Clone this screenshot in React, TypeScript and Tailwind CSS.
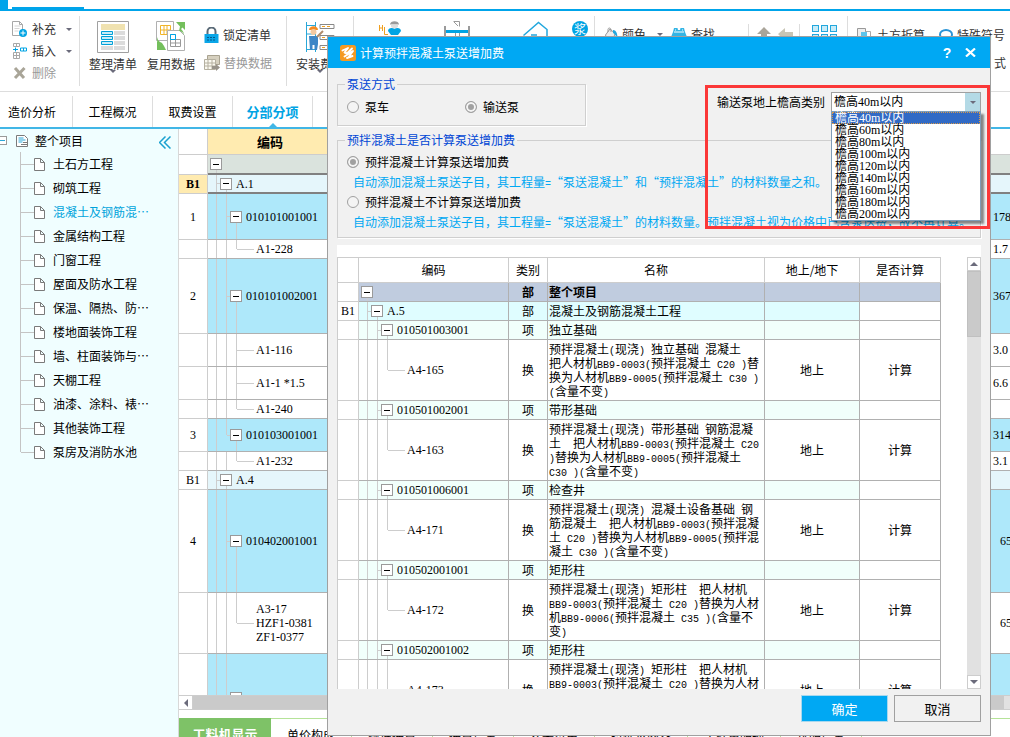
import { Fragment, type ReactNode } from 'react'
import clsx from 'clsx'

const HEIGHT_TYPES = [
  '檐高40m以内',
  '檐高60m以内',
  '檐高80m以内',
  '檐高100m以内',
  '檐高120m以内',
  '檐高140m以内',
  '檐高160m以内',
  '檐高180m以内',
  '檐高200m以内',
]

const SECTIONS = [
  '土石方工程',
  '砌筑工程',
  '混凝土及钢筋混…',
  '金属结构工程',
  '门窗工程',
  '屋面及防水工程',
  '保温、隔热、防…',
  '楼地面装饰工程',
  '墙、柱面装饰与…',
  '天棚工程',
  '油漆、涂料、裱…',
  '其他装饰工程',
  '泵房及消防水池',
]

const BOTTOM_TABS = ['单价构成', '标准换算', '换算信息', '安装费用', '特征及内容', '工程量明细', '说明信息']

type Node = { depth: number; leaf?: boolean; last?: boolean; code?: string }

type BillRow = Node & { no?: string; bold?: boolean; h: string; bg: string; line: string; value?: string; pad?: string }

const BLUE = 'bg-[#aee8fa]'
const PALE = 'bg-[#e5f6fb]'
const THIN = 'border-b border-b-[#b0b0b0]'
const THICK = 'border-b-2 border-b-[#808080]'

const BILL: BillRow[] = [
  { depth: 0, h: 'h-[18px]', bg: 'bg-[#dae3dd]', line: THICK },
  { no: 'B1', bold: true, depth: 1, code: 'A.1', h: 'h-[17px]', bg: PALE, line: THICK },
  { no: '1', depth: 2, code: '010101001001', h: 'h-[45px]', bg: BLUE, line: THIN, value: '178' },
  { depth: 3, leaf: true, last: true, code: 'A1-228', h: 'h-[18px]', bg: 'bg-white', line: THIN, value: '1.7' },
  { no: '2', depth: 2, code: '010101002001', h: 'h-[74px]', bg: BLUE, line: THIN, value: '367' },
  { depth: 3, leaf: true, code: 'A1-116', h: 'h-8', bg: 'bg-white', line: THIN, value: '3.0' },
  { depth: 3, leaf: true, code: 'A1-1 *1.5', h: 'h-8', bg: 'bg-white', line: THIN, value: '6.6' },
  { depth: 3, leaf: true, last: true, code: 'A1-240', h: 'h-[18px]', bg: 'bg-white', line: THIN },
  { no: '3', depth: 2, last: true, code: '010103001001', h: 'h-8', bg: BLUE, line: THIN, value: '314' },
  { depth: 3, leaf: true, last: true, code: 'A1-232', h: 'h-[18px]', bg: 'bg-white', line: THIN, value: '3.1' },
  { no: 'B1', depth: 1, code: 'A.4', h: 'h-[18px]', bg: PALE, line: THIN },
  { no: '4', depth: 2, code: '010402001001', h: 'h-[102px]', bg: BLUE, line: THIN, value: '65', pad: 'pl-2' },
  { depth: 3, leaf: true, last: true, code: 'A3-17\nHZF1-0381\nZF1-0377', h: 'h-15', bg: 'bg-white', line: THIN, value: '65', pad: 'pl-2' },
  { depth: 2, h: 'h-22', bg: BLUE, line: THIN },
]

type PumpRow = Node & { no?: string; kind: string; name: string; place?: string; calc?: string }

const PUMP: PumpRow[] = [
  { depth: 0, kind: '部', name: '整个项目' },
  { no: 'B1', depth: 1, code: 'A.5', kind: '部', name: '混凝土及钢筋混凝土工程' },
  { depth: 2, code: '010501003001', kind: '项', name: '独立基础' },
  {
    depth: 3, leaf: true, last: true, code: 'A4-165', kind: '换', place: '地上', calc: '计算',
    name: '预拌混凝土(现浇) 独立基础 混凝土\n把人材机BB9-0003(预拌混凝土 C20 )替\n换为人材机BB9-0005(预拌混凝土 C30 )\n(含量不变)',
  },
  { depth: 2, code: '010501002001', kind: '项', name: '带形基础' },
  {
    depth: 3, leaf: true, last: true, code: 'A4-163', kind: '换', place: '地上', calc: '计算',
    name: '预拌混凝土(现浇) 带形基础 钢筋混凝\n土  把人材机BB9-0003(预拌混凝土 C20\n)替换为人材机BB9-0005(预拌混凝土\nC30 )(含量不变)',
  },
  { depth: 2, code: '010501006001', kind: '项', name: '检查井' },
  {
    depth: 3, leaf: true, last: true, code: 'A4-171', kind: '换', place: '地上', calc: '计算',
    name: '预拌混凝土(现浇) 混凝土设备基础 钢\n筋混凝土  把人材机BB9-0003(预拌混凝\n土 C20 )替换为人材机BB9-0005(预拌混\n凝土 C30 )(含量不变)',
  },
  { depth: 2, code: '010502001001', kind: '项', name: '矩形柱' },
  {
    depth: 3, leaf: true, last: true, code: 'A4-172', kind: '换', place: '地上', calc: '计算',
    name: '预拌混凝土(现浇) 矩形柱  把人材机\nBB9-0003(预拌混凝土 C20 )替换为人材\n机BB9-0006(预拌混凝土 C35 )(含量不\n变)',
  },
  { depth: 2, code: '010502001002', kind: '项', name: '矩形柱' },
  {
    depth: 3, leaf: true, last: true, code: 'A4-173', kind: '换', place: '地上', calc: '计算',
    name: '预拌混凝土(现浇) 矩形柱  把人材机\nBB9-0003(预拌混凝土 C20 )替换为人材\n机BB9-0006(预拌混凝土 C35 )(含量不\n变)',
  },
]

// Half-width runs are set in the mono face so they take half a Chinese character each
function Mixed({ text }: { text: string }) {
  return (
    <>
      {text.split(/([\x20-\x7e]+)/).map((part, i) =>
        i % 2 ? (
          <span key={i} className="font-['Liberation_Mono',monospace] text-[10px] leading-[8px]">{part}</span>
        ) : (
          <Fragment key={i}>{part}</Fragment>
        )
      )}
    </>
  )
}

function Caret({ className }: { className?: string }) {
  return (
    <svg viewBox="0 0 6 3" className={clsx('h-[3px] w-1.5 shrink-0', className)} fill="#6b6b7b">
      <path d="M0 0h6L3 3z" />
    </svg>
  )
}

function MinusBox() {
  return (
    <button aria-label="折叠" className="flex size-3 shrink-0 items-center justify-center border border-[#9a9a9a] bg-white">
      <span className="h-px w-1.5 bg-black" />
    </button>
  )
}

function TreeCell({ depth, leaf, last, code, h }: Node & { h: string }) {
  return (
    <div className={clsx('-ml-px flex', h)}>
      {Array.from({ length: depth }, (_, i) => (
        <span
          key={i}
          className={clsx('w-2.5 shrink-0 border-r border-[#cdcdcd]', last && i === depth - 1 ? 'h-1/2' : 'h-full')}
        />
      ))}
      {leaf ? (
        <span className="h-px w-[17px] shrink-0 self-center bg-[#cdcdcd]" />
      ) : (
        <>
          <span className={clsx('h-px w-[3px] shrink-0 self-center', depth > 0 && 'bg-[#cdcdcd]')} />
          <span className="flex flex-col">
            <span className="flex-1" />
            <MinusBox />
            <span className="w-[7px] flex-1 border-r border-[#cdcdcd]" />
          </span>
        </>
      )}
      <span
        className={clsx(
          "self-center whitespace-pre text-left font-['Liberation_Serif',serif] leading-[14px]",
          leaf ? 'ml-0.5' : 'ml-1'
        )}
      >
        {code}
      </span>
    </div>
  )
}

/* Ribbon icons */

const AddPageIcon = () => (
  <svg viewBox="0 0 15 16" className="h-4 w-[15px]" fill="none">
    <path d="M.5.5h7l3 3v11H.5zM7.5.5v3h3" stroke="#a8a8a8" fill="#fff" />
    <path d="M2.5 5h6M2.5 7.500h5M2.5 10h4" stroke="#d5d5d5" />
    <circle cx="11" cy="12" r="4" fill="#00a4e4" />
    <path d="M11 9.500v5M8.500 12h5" stroke="#fff" />
  </svg>
)

const InsertIcon = () => (
  <svg viewBox="0 0 15 16" className="h-4 w-[15px]" fill="none">
    <path d="M1.500.5h6v3h-6zM4.500.5v3M1.500 9.500h6v6h-6zM4.500 9.500v6M1.500 12.500h6" stroke="#a8a8a8" />
    <path d="M1 6.500h5M3.500 4.500v4M8.500 5h6v3h-6zM11.500 5v3" stroke="#00a4e4" />
  </svg>
)

const DeleteIcon = () => (
  <svg viewBox="0 0 15 16" className="h-4 w-[15px]" fill="none">
    <path d="M3 3l9 10M12.500 3L3 13" stroke="#a9a598" strokeWidth="3" />
  </svg>
)

const ListIcon = () => (
  <svg viewBox="0 0 32 32" className="size-8" fill="none">
    <path d="M.5.5h31v31H.5z" stroke="#a0a0a0" fill="#fff" />
    <path d="M4 3h24v6H4z" fill="#f0e2b0" />
    <path d="M17 10h11v4H17zM17 15h11v4H17zM17 20h11v4H17zM4 25h12v4H4zM17 25h11v4H17z" fill="#dcdcdc" />
    <path d="M4.500 10.500h11v3h-11zM4.500 15.500h11v3h-11zM4.500 20.500h11v3h-11z" stroke="#00a0d8" fill="#c8ecf8" />
  </svg>
)

const ReuseIcon = () => (
  <svg viewBox="0 0 30 32" className="h-8 w-[30px]" fill="none">
    <path d="M.5.5h17v19H.5z" stroke="#b0b0b0" fill="#fff" />
    <path d="M4.500 4.500h10v9h-10zM8 4.500v9M11 4.500v9M4.500 9h10" stroke="#f0b429" />
    <path d="M11.500 9.500h12l5 5v15h-17z" stroke="#b0b0b0" fill="#fff" />
    <path d="M14.500 13.500h5v5h-5zM14.500 18.500h10v7h-10zM19.500 18.500v7M14.500 22h10" stroke="#999" />
    <path d="M14.500 13.500h5v5h-5z" stroke="#00a4e4" />
    <path d="M20 1h9v8l-2.500-2.500-1.500 1.500c2 2 3 4 3 6-1-3-3-4-5-4l1-4.500zM10 29H1v-9l2 2.500C1 21 1 19 1 16c1 4 3 5 5 6l2 3z" fill="#74bf5c" />
  </svg>
)

const LockIcon = () => (
  <svg viewBox="0 0 15 17" className="h-[17px] w-[15px]" fill="none">
    <path d="M3.500 7V4.500a4 4 0 018 0V7" stroke="#5b6b78" strokeWidth="2" />
    <path d="M.5 7h14v9H.5z" fill="#0aa6e8" />
    <path d="M3 10.500h9M3 13h9" stroke="#04598a" strokeDasharray="2 1" />
  </svg>
)

const ReplaceIcon = () => (
  <svg viewBox="0 0 16 16" className="size-4" fill="none">
    <path d="M3.500.5h12v9h-12z" fill="#d6d0bf" stroke="#a8a290" />
    <path d="M.5 4.500h11v10H.5zM.5 8h11M.5 11h11M4 4.500v10M8 4.500v10" fill="#fbf9f0" stroke="#b5b0a0" />
    <path d="M8 11h4V9l4 3.500-4 3.500v-2H8z" fill="#98938a" />
  </svg>
)

const InstallIcon = () => (
  <svg viewBox="0 0 32 32" className="size-8" fill="none">
    <path d="M2.500 1v30M11.500 1v30M2.500 4.500h9M2.500 13h9M2.500 28.500h9" stroke="#2aa7d8" />
    <path d="M16 3.500h14v4H16zM16 14.500h14v4H16zM16 24.500h14v4H16z" stroke="#888" fill="#fff" />
    <path d="M18 5.500h10M18 16.500h10M18 26.500h10" stroke="#f0a020" strokeDasharray="3 2" />
    <path d="M5 9c0-5 9-5 9 0z" fill="#f58a1f" />
    <circle cx="9.500" cy="11" r="3" fill="#f3c9a0" />
    <path d="M5 15h9v8l-1 6h-2.500v-5h-2v5H6z" fill="#3d86c6" />
    <path d="M13 16l6-6" stroke="#b08b6a" strokeWidth="2" />
  </svg>
)

const WorkerIcon = () => (
  <svg viewBox="0 0 22 22" className="size-[22px] shrink-0" fill="none">
    <path d="M.5 4v6M3.500 4v6M.5 7h3M5.500 6v7.500H9" stroke="#f0a020" />
    <path d="M11 3.500c0-4.500 9-4.500 9 0z" fill="#9a9a9a" />
    <path d="M12 3.500h7v2.500l-3.500 2L12 6z" fill="#ddd" />
    <path d="M9 10c0-3 4-4 6.500-2 2.500-2 6.500-1 6.500 2l-3 4h-7z" fill="#00a4e4" />
  </svg>
)

const BridgeIcon = () => (
  <svg viewBox="0 0 26 22" className="h-[22px] w-[26px] shrink-0" fill="none">
    <path d="M1 5v17M25 5v17" stroke="#9a9a9a" strokeWidth="2" />
    <path d="M2 9h22v3H2z" fill="#00a4e4" />
    <path d="M9.500.5h6v5M10 1l4 4M11.500 12v5M15.500 12v5" stroke="#9a9a9a" />
  </svg>
)

const HouseIcon = () => (
  <svg viewBox="0 0 25 22" className="h-[22px] w-[25px] shrink-0" fill="none">
    <path d="M.5 14.500L15.500 1.500l8.500 7V20M8 14h6" stroke="#22a7dd" strokeWidth="1.500" />
  </svg>
)

const PaintIcon = () => (
  <svg viewBox="0 0 14 14" className="size-3.5 shrink-0" fill="none">
    <path d="M1.500 8L6 2l5 4.500L9 13H3z" stroke="#999" fill="#eee" />
    <path d="M4 5V2.500C4 .5 7 .5 7 3v2" stroke="#999" />
    <path d="M9 3c3 0 4.500 3 4.500 8-1.500-1-2-4-4.500-5z" fill="#22a7dd" />
  </svg>
)

const BinocularIcon = () => (
  <svg viewBox="0 0 16 14" className="h-3.5 w-4 shrink-0">
    <path d="M3 1h3.500l.5 2h2l.5-2H13l1 4 2 5v4H9v-4H7v4H0v-4l2-5z" fill="#33b5e5" />
    <path d="M3 5h10M4 3h1M11 3h1" stroke="#fff" />
  </svg>
)

const BlocksIcon = () => (
  <svg viewBox="0 0 26 22" className="h-[22px] w-[26px] shrink-0" fill="#c8ecf8" stroke="#22a7dd">
    {[0, 9, 18].map((x) => (
      <Fragment key={x}>
        <rect x={x + 0.5} y=".5" width="6" height="6" />
        <rect x={x + 0.5} y="9.5" width="6" height="6" />
      </Fragment>
    ))}
  </svg>
)

const LogoIcon = () => (
  <svg viewBox="0 0 16 16" className="size-4 shrink-0">
    <rect width="16" height="16" rx="2.500" fill="#f59a22" />
    <path
      d="M2.500 5.500L8 3 4.500 7.500 7 8.500 12 3.500M4.500 11.500L13 6l-4 5.500M7 13l5.500-2"
      fill="none"
      stroke="#fff"
      strokeWidth="1.900"
      strokeLinecap="round"
      strokeLinejoin="round"
    />
  </svg>
)

const PageIcon = () => (
  <svg viewBox="0 0 11 13" className="h-[13px] w-[11px] shrink-0">
    <path d="M.5.5h6l4 4v8H.5zM6.500.5v4h4" fill="#fff" stroke="#7a7a7a" />
  </svg>
)

function BigButton({ icon, label, caret }: { icon: ReactNode; label: string; caret?: boolean }) {
  return (
    <button className="flex w-[50px] shrink-0 flex-col items-center text-[#333]">
      {icon}
      <span className="mt-[3px] leading-4 whitespace-nowrap">{label}</span>
      {caret && <Caret className="-mt-0.5" />}
    </button>
  )
}

function Ribbon() {
  return (
    <div className="flex h-[81px] shrink-0 overflow-hidden border-b border-[#ddd] py-[5px] text-[#333]">
      <div className="flex w-20 shrink-0 flex-col border-r border-[#ddd] pt-0.5 pl-3">
        <button className="flex h-[22px] items-center">
          <AddPageIcon />
          <span className="ml-[5px]">补充</span>
          <Caret className="ml-2.5" />
        </button>
        <button className="flex h-[22px] items-center">
          <InsertIcon />
          <span className="ml-[5px]">插入</span>
          <Caret className="ml-2.5" />
        </button>
        <button className="flex h-[22px] items-center text-[#999]">
          <DeleteIcon />
          <span className="ml-[5px]">删除</span>
        </button>
      </div>

      <div className="flex w-[207px] shrink-0 items-start gap-2 border-r border-[#ddd] pt-[5px] pl-2">
        <BigButton icon={<ListIcon />} label="整理清单" caret />
        <BigButton icon={<ReuseIcon />} label="复用数据" />
        <div className="flex flex-col">
          <button className="flex h-7 items-center gap-1">
            <LockIcon />
            锁定清单
          </button>
          <button className="flex h-7 items-center gap-1 text-[#999]">
            <ReplaceIcon />
            替换数据
          </button>
        </div>
      </div>

      <div className="flex w-[67px] shrink-0 items-start border-r border-[#ddd] pt-[5px] pl-2">
        <BigButton icon={<InstallIcon />} label="安装费用" caret />
      </div>

      <div className="flex w-[241px] shrink-0 items-start border-r border-[#ddd] pt-[5px] pl-[25px]">
        <WorkerIcon />
        <span className="ml-[43px]"><BridgeIcon /></span>
        <span className="ml-[53px]"><HouseIcon /></span>
        <span className="ml-6 flex size-4 shrink-0 items-center justify-center rounded-full bg-[#00a4e4] text-white">浆</span>
      </div>

      <div className="flex w-[253px] shrink-0 items-start border-r border-[#ddd] pl-[9px]">
        <div className="flex h-9 items-center">
          <PaintIcon />
          <span className="ml-1">颜色</span>
          <Caret className="ml-[11px]" />
          <span className="ml-2"><BinocularIcon /></span>
          <span className="ml-1">查找</span>
          <span className="ml-[33px] h-5 w-px bg-[#ddd]" />
          <svg viewBox="0 0 14 14" className="ml-2 size-3.5" fill="#aaa59a"><path d="M7 0l7 7h-4v7H4V7H0z" /></svg>
          <svg viewBox="0 0 15 14" className="ml-[7px] h-3.5 w-[15px]" fill="#c8c5b5"><path d="M0 7l7-6v4h8v6H7v3z" /></svg>
          <span className="ml-1.5 h-5 w-px bg-[#ddd]" />
          <span className="mt-1 ml-3"><BlocksIcon /></span>
        </div>
      </div>

      <div className="flex-1 pt-[5px] pl-[9px]">
        <div className="flex h-7 items-center whitespace-nowrap">
          <svg viewBox="0 0 14 14" className="size-3.5 shrink-0" fill="none">
            <path d="M.5.5h8v13h-8z" stroke="#999" fill="#eee" />
            <path d="M8.500 3.500h5v10h-5z" stroke="#aaa" />
            <path d="M4 4h6v8H4z" fill="#5cc4ec" />
          </svg>
          <span className="ml-1.5">土方折算</span>
          <svg viewBox="0 0 14 14" className="ml-3.5 size-3.5 shrink-0" fill="none" stroke="#2a94d6" strokeWidth="2">
            <path d="M1 13h4v-2C2 10 1 8 1 6.500a6 4.500 0 0112 0C13 8 12 10 9 11v2h4" />
          </svg>
          <span className="ml-1">特殊符号</span>
        </div>
        <div className="flex h-7 items-center justify-end pr-1">式</div>
      </div>
    </div>
  )
}

function NavTabs() {
  return (
    <nav className="flex h-[37px] shrink-0 items-end border-b-2 border-[#41b6e6]">
      {['造价分析', '工程概况', '取费设置', '分部分项'].map((t, i) => (
        <a
          key={t}
          href="#"
          className={clsx(
            'relative flex h-[31px] items-center justify-center border-r border-[#ddd]',
            i === 0 ? 'w-[73px] pr-2' : 'w-20',
            i === 3 ? 'text-[13px] font-bold text-[#00a4e4]' : 'text-black'
          )}
        >
          {t}
          {i === 3 && (
            <svg viewBox="0 0 8 4" className="absolute bottom-0 h-1 w-2" fill="#41b6e6"><path d="M0 4l4-4 4 4z" /></svg>
          )}
        </a>
      ))}
    </nav>
  )
}

function Sidebar() {
  return (
    <aside className="w-[179px] shrink-0 border-r border-[#d8d8d8] bg-[#f0feff]">
      <div className="flex h-[23px] items-center">
        <button aria-label="折叠" className="flex h-[9px] w-[7px] items-center border border-l-0 border-[#9a9a9a] bg-white">
          <span className="h-px w-[5px] bg-[#2aa7d8]" />
        </button>
        <svg viewBox="0 0 12 12" className="ml-[9px] size-3" fill="none">
          <path d="M.5.5h8l3 3v8H.5z" fill="#fff" stroke="#7a7a7a" />
          <path d="M2.500 3h5M2.500 5h7M2.500 7h4" stroke="#2aa7d8" />
          <path d="M5 9.500h6M7 7.500h4" stroke="#7a7a7a" />
        </svg>
        <span className="ml-[7px]">整个项目</span>
        <button aria-label="收起" className="ml-auto pt-1 pr-[7px]">
          <svg viewBox="0 0 12 13" className="h-[13px] w-3" fill="none" stroke="#1ba1d0" strokeWidth="1.500">
            <path d="M6.500.5l-6 6 6 6M11.500.5l-6 6 6 6" />
          </svg>
        </button>
      </div>
      <ul>
        {SECTIONS.map((s, i) => (
          <li key={s} className="ml-5 flex h-6">
            <span className={clsx('w-px bg-[#c4c4c4]', i === SECTIONS.length - 1 ? 'h-1/2' : 'h-full')} />
            <span className="h-px w-[13px] self-center bg-[#c4c4c4]" />
            <a href="#" className={clsx('flex items-center gap-2', i === 2 ? 'text-[#00a4dc]' : 'text-black')}>
              <PageIcon />
              {s}
            </a>
          </li>
        ))}
      </ul>
    </aside>
  )
}

function BillTable() {
  return (
    <div className="min-h-0 flex-1 overflow-hidden">
      <table className="w-full table-fixed border-separate border-spacing-0">
        <colgroup>
          <col className="w-[29px]" />
          <col className="w-[125px]" />
          <col />
          <col className="w-[18px]" />
        </colgroup>
        <thead>
          <tr className="h-[26px]">
            <th className="border-r border-b border-[#cdcdcd] p-0" />
            <th className="border-r border-b border-[#cdcdcd] bg-[#ffebb0] p-0 text-[13px] font-bold">编码</th>
            <th className="border-b border-[#cdcdcd] p-0" />
            <th className="border-b border-[#cdcdcd] p-0" />
          </tr>
        </thead>
        <tbody>
          {BILL.map((r, i) => (
            <tr key={i}>
              <td
                className={clsx(
                  "border-r border-b border-[#cdcdcd] p-0 text-center font-['Liberation_Serif',serif] leading-[14px]",
                  r.bold && 'bg-[#ffebb0] font-bold'
                )}
              >
                {r.no}
              </td>
              <td className={clsx('border-r border-r-[#b0b0b0] p-0', r.bg, r.line)}>
                <TreeCell {...r} />
              </td>
              <td className={clsx('p-0', r.bg, r.line)} />
              <td
                className={clsx(
                  "overflow-hidden p-0 font-['Liberation_Serif',serif] leading-[14px] whitespace-nowrap",
                  r.bg, r.line, r.pad ?? 'pl-px'
                )}
              >
                {r.value}
              </td>
            </tr>
          ))}
        </tbody>
      </table>
    </div>
  )
}

function BottomTabs() {
  return (
    <div className="mt-2 flex h-[19px] shrink-0 items-start overflow-hidden">
      <button className="h-8 w-[92px] shrink-0 bg-[#7ec267] text-[13px] font-bold text-white">工料机显示</button>
      <div className="flex flex-1 border-t border-[#b5e398]">
        {BOTTOM_TABS.map((t) => (
          <button key={t} className="h-8 shrink-0 border-r border-[#b5e398] px-4 text-black">{t}</button>
        ))}
      </div>
    </div>
  )
}

function Radio({ name, label, checked, className }: { name: string; label: string; checked?: boolean; className?: string }) {
  return (
    <label className={clsx('flex items-center gap-1.5', className)}>
      <input
        type="radio"
        name={name}
        defaultChecked={checked}
        className="size-3 shrink-0 appearance-none rounded-full border border-[#a0a0a0] bg-[#f4f4f4] checked:bg-[#a0a0a0] checked:shadow-[inset_0_0_0_2px_#f4f4f4]"
      />
      {label}
    </label>
  )
}

function HeightSelect() {
  return (
    <div className="mt-4 flex h-5 items-center gap-1.5">
      <label htmlFor="height-type">输送泵地上檐高类别</label>
      <div className="relative w-[150px]">
        <select
          id="height-type"
          className="block h-5 w-full appearance-none border border-[#a0a0a0] bg-white pl-0.5 font-['Liberation_Serif','Noto_Sans_CJK_SC',serif] text-xs text-black"
        >
          {HEIGHT_TYPES.map((h) => (
            <option key={h}>{h}</option>
          ))}
        </select>
        <span className="pointer-events-none absolute inset-y-px right-px flex w-[15px] items-center justify-center bg-[#b4dae6]">
          <Caret />
        </span>
        <ul
          role="listbox"
          className="absolute top-[19px] left-0 z-10 w-full border border-[#7f9db9] bg-white font-['Liberation_Serif','Noto_Sans_CJK_SC',serif] shadow-[3px_3px_2px_rgba(0,0,0,0.45)]"
        >
          {HEIGHT_TYPES.map((h, i) => (
            <li
              key={h}
              role="option"
              aria-selected={i === 0}
              className={clsx(
                'h-3 pl-[3px] leading-3 whitespace-nowrap',
                i === 0 && 'bg-[#316ac5] text-white outline-1 -outline-offset-1 outline-[#d89a4a] outline-dotted'
              )}
            >
              {h}
            </li>
          ))}
        </ul>
      </div>
    </div>
  )
}

function rowColor(r: PumpRow) {
  if (r.depth === 0) return 'bg-[#c0ccdf]'
  if (r.depth === 1) return 'bg-[#dffdff]'
  return r.leaf ? 'bg-white' : 'bg-[#f1fffb]'
}

function PumpTable() {
  const cell = 'border-r border-b border-[#b0b0b0] p-0'
  return (
    <table className="w-full table-fixed border-separate border-spacing-0 border-t border-l border-[#cdcdcd] leading-[14px]">
      <colgroup>
        <col className="w-[21px]" />
        <col className="w-[150px]" />
        <col className="w-[39px]" />
        <col />
        <col className="w-[95px]" />
        <col className="w-[81px]" />
      </colgroup>
      <thead>
        <tr className="h-[25px]">
          {['', '编码', '类别', '名称', '地上/地下', '是否计算'].map((t) => (
            <th key={t} className="border-r border-b border-[#cdcdcd] p-0 font-normal">{t}</th>
          ))}
        </tr>
      </thead>
      <tbody>
        {PUMP.map((r, i) => {
          const bg = rowColor(r)
          const bold = r.depth === 0 && 'font-bold'
          return (
            <tr key={i}>
              <td className="border-r border-b border-[#cdcdcd] p-0 text-center font-['Liberation_Serif',serif]">{r.no}</td>
              <td className={clsx(cell, bg)}>
                <TreeCell {...r} h={r.leaf ? 'h-15' : 'h-[18px]'} />
              </td>
              <td className={clsx(cell, bg, bold, 'text-center')}>{r.kind}</td>
              <td className={clsx(cell, bg, bold, 'overflow-hidden pl-px whitespace-pre')}>
                <Mixed text={r.name} />
              </td>
              <td className={clsx(cell, bg, 'text-center')}>{r.place}</td>
              <td className={clsx(cell, r.depth === 0 && bg, 'text-center')}>{r.calc}</td>
            </tr>
          )
        })}
      </tbody>
    </table>
  )
}

function Dialog() {
  return (
    <div
      role="dialog"
      aria-label="计算预拌混凝土泵送增加费"
      className="absolute top-9 right-[19px] bottom-px left-[327px] flex flex-col border border-[#a0a0a0] bg-[#f1f1f1]"
    >
      <header className="flex h-[31px] shrink-0 items-center bg-[#00a8f3] pr-3.5 pl-3 text-white">
        <LogoIcon />
        <h1 className="ml-1">计算预拌混凝土泵送增加费</h1>
        <button className="ml-auto w-3 font-['Liberation_Sans',sans-serif] text-sm font-bold" aria-label="帮助">?</button>
        <button className="ml-3" aria-label="关闭">
          <svg viewBox="0 0 11 9" className="h-[9px] w-[11px]" stroke="#fff" strokeWidth="2.200">
            <path d="M1 .5l9 8M10 .5l-9 8" />
          </svg>
        </button>
      </header>

      <div className="flex min-h-0 flex-1 flex-col pt-2 pr-[9px] pb-[13px] pl-[9px]">
        <div className="flex shrink-0 items-start justify-between">
          <fieldset className="w-[249px] border border-[#cfcfcf] pt-[7px] pr-0 pb-2.5 pl-[9px] shadow-[1px_1px_0_#fff]">
            <legend className="-ml-0.5 px-0.5 leading-4 text-[#0046d5]">泵送方式</legend>
            <div className="flex h-4">
              <Radio name="mode" label="泵车" className="w-[118px]" />
              <Radio name="mode" label="输送泵" checked />
            </div>
          </fieldset>
          <HeightSelect />
        </div>

        <fieldset className="mt-1.5 shrink-0 border border-[#cfcfcf] pt-1 pr-0 pb-[5px] pl-[9px] leading-5 whitespace-nowrap shadow-[1px_1px_0_#fff]">
          <legend className="-ml-0.5 px-0.5 leading-4 text-[#0046d5]">预拌混凝土是否计算泵送增加费</legend>
          <Radio name="calc" label="预拌混凝土计算泵送增加费" checked />
          <p className="pl-1.5 text-[#00a8f3]">
            <Mixed text="自动添加混凝土泵送子目，其工程量=“泵送混凝土”和“预拌混凝土”的材料数量之和。" />
          </p>
          <Radio name="calc" label="预拌混凝土不计算泵送增加费" />
          <p className="pl-1.5 text-[#00a8f3]">
            <Mixed text="自动添加混凝土泵送子目，其工程量=“泵送混凝土”的材料数量。预拌混凝土视为价格中已含泵送费，故不再计算。" />
          </p>
        </fieldset>

        <div className="mt-[7px] flex min-h-0 flex-1 overflow-hidden bg-white pt-3">
          <div className="mr-[26px] flex-1 overflow-hidden">
            <PumpTable />
          </div>
          <div className="flex w-3.5 flex-col bg-[#e1e1e1]">
            <button aria-label="向上滚动" className="flex h-3.5 items-center justify-center border border-[#cdcdcd] bg-white">
              <svg viewBox="0 0 8 4" className="h-1 w-2" fill="#6b6b7b"><path d="M0 4l4-4 4 4z" /></svg>
            </button>
            <div className="h-[66px] border border-[#c0c0c0] bg-[#cacaca]" />
            <button aria-label="向下滚动" className="mt-auto flex h-3.5 items-center justify-center border border-[#cdcdcd] bg-white">
              <svg viewBox="0 0 8 4" className="h-1 w-2" fill="#6b6b7b"><path d="M0 0h8L4 4z" /></svg>
            </button>
          </div>
        </div>

        <footer className="mt-1.5 flex shrink-0 justify-end gap-1.5">
          <button className="h-[27px] w-[87px] border border-[#a8d8ee] bg-[#00a8f3] text-[13px] text-white">确定</button>
          <button className="h-[27px] w-[87px] border border-[#a0a0a0] bg-[#f1f1f1] text-[13px]">取消</button>
        </footer>
      </div>

      {/* Highlight frame around the height selector */}
      <div className="pointer-events-none absolute top-12 right-0 h-36 w-[285px] border-3 border-[#fb3838]" />
    </div>
  )
}

export default function App() {
  return (
    <div
      lang="zh-CN"
      className="relative flex h-screen w-full flex-col overflow-hidden bg-white font-['Noto_Sans_CJK_SC',sans-serif] text-xs text-black"
    >
      <div className="flex h-[11px] shrink-0 items-end border-b-2 border-[#00a4ea]">
        <div className="h-full w-2 bg-[#00a4ea]" />
        <div className="ml-1 h-0.5 w-[72px] bg-[#00a4ea]" />
      </div>
      <Ribbon />
      <NavTabs />
      <div className="flex min-h-0 flex-1">
        <Sidebar />
        <main className="flex min-w-0 flex-1 flex-col">
          <BillTable />
          <div className="flex h-[15px] shrink-0 border-y border-[#cdcdcd] bg-[#e1e1e1]">
            <button aria-label="向左滚动" className="flex w-3.5 items-center justify-center border-r border-[#cdcdcd] bg-white">
              <svg viewBox="0 0 4 8" className="h-2 w-1" fill="#6b6b7b"><path d="M4 0v8L0 4z" /></svg>
            </button>
            <div className="mr-1.5 flex-1 bg-[#cacaca]" />
          </div>
          <BottomTabs />
        </main>
      </div>
      <Dialog />
    </div>
  )
}
